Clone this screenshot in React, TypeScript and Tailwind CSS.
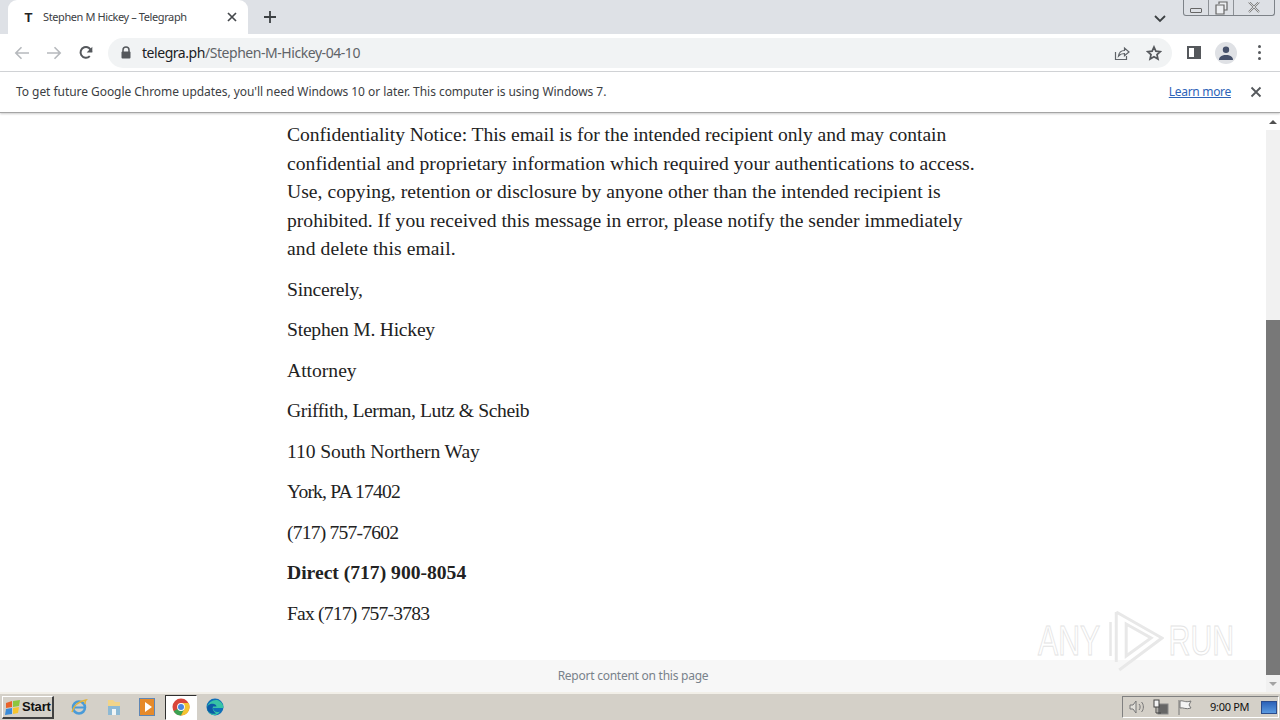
import React from "react";

const ui = "font-['Noto_Sans','Open_Sans',sans-serif]";

function Tab() {
  return (
    <div className="relative ml-[8px] flex h-[34px] w-[240px] items-center self-end rounded-t-[9px] bg-white pl-[14px] pr-[9px]">
      <span className="w-[13px] text-center font-['Liberation_Sans',sans-serif] text-[13px] font-bold leading-none text-[#222]">T</span>
      <span className="ml-[8px] flex-1 whitespace-nowrap text-[11px] tracking-[-0.4px] text-[#3c4043]">Stephen M Hickey – Telegraph</span>
      <svg width="12" height="12" viewBox="0 0 12 12" className="mr-[1px]"><path d="M2 2l8 8M10 2l-8 8" stroke="#45484c" strokeWidth="1.7" /></svg>
    </div>
  );
}

function TitleBar() {
  return (
    <div className="flex h-[34px] items-end bg-[#dee1e6]">
      <Tab />
      <div className="flex h-[34px] w-[44px] items-center justify-center">
        <svg width="14" height="14" viewBox="0 0 14 14"><path d="M7 1v12M1 7h12" stroke="#3c4043" strokeWidth="1.8" /></svg>
      </div>
      <div className="flex-1" />
      <div className="mr-[17px] flex h-[34px] items-center pt-[3px]">
        <svg width="12" height="8" viewBox="0 0 12 8"><path d="M1 1l5 5 5-5" fill="none" stroke="#3c4043" strokeWidth="1.8" /></svg>
      </div>
      <div className="mb-[18px] mr-[5px] flex h-[16px] w-[92px] items-center rounded-b-[3px] border border-t-0 border-[#7d8288] bg-[#dde0e5]">
        <div className="flex h-full w-[25px] items-center justify-center border-r border-[#8d9196]">
          <span className="mt-[5px] block h-[5px] w-[12px] rounded-[1px] border border-[#666]" />
        </div>
        <div className="flex h-full w-[25px] items-center justify-center border-r border-[#8d9196]">
          <svg width="13" height="14" viewBox="0 0 13 14"><path d="M4 3V1h8v8h-3M1 4h8v9H1z" fill="#eceef1" stroke="#666" strokeWidth="1.2" /></svg>
        </div>
        <div className="flex h-full flex-1 items-center justify-center">
          <svg width="12" height="11" viewBox="0 0 12 11"><path d="M1 0l10 10M11 0L1 10" stroke="#777" strokeWidth="2" /><path d="M1 0l10 10M11 0L1 10" stroke="#fff" strokeWidth="0.7" /></svg>
        </div>
      </div>
    </div>
  );
}

function Toolbar() {
  return (
    <div className="flex h-[38px] items-center border-b border-[#d3d5d8] bg-white">
      <div className="ml-[14px] flex w-[16px] justify-center">
        <svg width="16" height="14" viewBox="0 0 16 14"><path d="M15 7H2M7.5 1.2L1.8 7l5.7 5.8" fill="none" stroke="#b6b9bd" strokeWidth="1.6" /></svg>
      </div>
      <div className="ml-[16px] flex w-[16px] justify-center">
        <svg width="16" height="14" viewBox="0 0 16 14"><path d="M1 7h13M8.500 1.200L14.200 7l-5.700 5.800" fill="none" stroke="#b6b9bd" strokeWidth="1.6" /></svg>
      </div>
      <div className="ml-[16px] flex w-[16px] justify-center">
        <svg width="17" height="17" viewBox="0 0 24 24"><path d="M20 11a8.100 8.100 0 1 0-2.300 6.500" fill="none" stroke="#55585c" strokeWidth="3" /><path d="M21.500 3.500v8.500H13z" fill="#55585c" /></svg>
      </div>
      <div className="ml-[14px] flex h-[30px] flex-1 items-center rounded-full bg-[#f1f3f4] pl-[12px]">
        <svg width="12" height="13" viewBox="0 0 12 13"><path d="M3 6V4a3 3 0 0 1 6 0v2" fill="none" stroke="#55585c" strokeWidth="1.5" /><rect x="1.500" y="5.500" width="9" height="7" rx="1" fill="#55585c" /></svg>
        <span className="ml-[10px] whitespace-nowrap text-[14px] tracking-[-0.45px] text-[#202124]">telegra.ph<span className="text-[#5f6368]">/Stephen-M-Hickey-04-10</span></span>
        <div className="flex-1" />
        <svg width="16" height="16" viewBox="0 0 16 16" className="mr-[16px]"><path d="M1.500 7v7.500h11V11" fill="none" stroke="#5f6368" strokeWidth="1.200" /><path d="M4.500 11c.5-3.500 3-5.500 6-5.500V3l4.500 4-4.500 3.800V8.500c-2.500 0-4.500.8-6 2.500z" fill="none" stroke="#5f6368" strokeWidth="1.200" /></svg>
        <svg width="16" height="16" viewBox="0 0 24 24" className="mr-[10px]"><path d="M12 3l2.800 6.200 6.700.7-5 4.500 1.400 6.600L12 17.600 6.100 21l1.400-6.600-5-4.500 6.700-.7z" fill="none" stroke="#55585c" strokeWidth="2.600" /></svg>
      </div>
      <div className="ml-[15px] flex w-[14px] justify-center">
        <div className="flex h-[13px] w-[14px] border-2 border-[#55585c]"><div className="w-[5px]" /><div className="flex-1 bg-[#55585c]" /></div>
      </div>
      <div className="ml-[14px] flex h-[22px] w-[22px] items-center justify-center overflow-hidden rounded-full bg-[#dfe1e5]">
        <svg width="14" height="14" viewBox="0 0 14 14"><circle cx="7" cy="3.800" r="3.200" fill="#45506a" /><path d="M0 14c0-3.500 3-5 7-5s7 1.500 7 5z" fill="#45506a" /></svg>
      </div>
      <div className="ml-[20px] mr-[19px] flex w-[4px] flex-col items-center gap-[3px]">
        <span className="h-[3px] w-[3px] rounded-full bg-[#55585c]" />
        <span className="h-[3px] w-[3px] rounded-full bg-[#55585c]" />
        <span className="h-[3px] w-[3px] rounded-full bg-[#55585c]" />
      </div>
    </div>
  );
}

function InfoBar() {
  return (
    <div className="relative z-10 flex h-[41px] items-center border-b border-[#a5a5a5] bg-white pl-[16px] pr-[18px] shadow-[0_1px_2px_rgba(0,0,0,0.2)]">
      <span className="flex-1 whitespace-nowrap text-[12px] tracking-[-0.05px] text-[#3c4043]">To get future Google Chrome updates, you'll need Windows 10 or later. This computer is using Windows 7.</span>
      <span className="mr-[19px] text-[12px] tracking-[-0.3px] text-[#2d63b8] underline">Learn more</span>
      <svg width="12" height="12" viewBox="0 0 12 12"><path d="M1.500 1.500l9 9M10.500 1.500l-9 9" stroke="#55585c" strokeWidth="1.800" /></svg>
    </div>
  );
}

const P = ({ children, className }: { children: React.ReactNode; className?: string }) => (
  <p className={`mb-[12px] whitespace-nowrap ${className ?? ""}`}>{children}</p>
);

function Watermark() {
  return (
    <div className="absolute bottom-[20px] left-[1038px] flex origin-left scale-x-[0.72] items-center gap-[13px] font-['Liberation_Sans',sans-serif] text-[42px] leading-none text-transparent [-webkit-text-stroke:1px_#e4e4e4]">
      <span>ANY</span>
      <svg width="76" height="62" viewBox="0 0 55 62" preserveAspectRatio="none">
        <path d="M7 2L53 28 10 60M17 14L42 28 17 46ZM1 12V46M7 2V52" fill="none" stroke="#e8e8e8" strokeWidth="3" />
      </svg>
      <span className="ml-[-7px]">RUN</span>
    </div>
  );
}

function Page() {
  return (
    <div className="relative flex min-h-0 flex-1">
      <div className="flex min-w-0 flex-1 flex-col bg-white">
        <div className="min-h-0 flex-1 overflow-hidden pl-[287px] pt-[8px] font-['Liberation_Serif',serif] text-[19.6px] leading-[28.5px] text-[#222]">
          <div className="mb-[12px] flex flex-col whitespace-nowrap">
            <p className="tracking-[-0.05px]">Confidentiality Notice: This email is for the intended recipient only and may contain</p>
            <p className="tracking-[0.05px]">confidential and proprietary information which required your authentications to access.</p>
            <p className="tracking-[0.035px]">Use, copying, retention or disclosure by anyone other than the intended recipient is</p>
            <p className="tracking-[0.02px]">prohibited. If you received this message in error, please notify the sender immediately</p>
            <p className="tracking-[0.1px]">and delete this email.</p>
          </div>
          <P className="tracking-[-0.2px]">Sincerely,</P>
          <P className="tracking-[-0.23px]">Stephen M. Hickey</P>
          <P>Attorney</P>
          <P className="tracking-[-0.39px]">Griffith, Lerman, Lutz &amp; Scheib</P>
          <P className="tracking-[-0.1px]">110 South Northern Way</P>
          <P className="tracking-[-0.8px]">York, PA 17402</P>
          <P className="tracking-[-0.8px]">(717) 757-7602</P>
          <P className="font-bold">Direct (717) 900-8054</P>
          <P className="tracking-[-0.8px]">Fax (717) 757-3783</P>
        </div>
        <div className="flex h-[32px] shrink-0 items-center justify-center bg-[#f7f7f7] text-[12px] tracking-[-0.25px] text-[#79828b]">Report content on this page</div>
      </div>
      <div className="flex w-[14px] shrink-0 flex-col bg-[#f1f1f1]">
        <div className="flex h-[17px] items-center justify-center bg-white">
          <span className="h-0 w-0 border-x-[4px] border-b-[4px] border-x-transparent border-b-[#505050]" />
        </div>
        <div className="h-[190px]" />
        <div className="flex-1 bg-[#787878]" />
        <div className="flex h-[17px] items-center justify-center">
          <span className="h-0 w-0 border-x-[4px] border-t-[4px] border-x-transparent border-t-[#a3a3a3]" />
        </div>
      </div>
      <Watermark />
    </div>
  );
}

function Taskbar() {
  return (
    <div className="flex h-[28px] shrink-0 items-center border-t-2 border-[#f2efe8] bg-[#d4d0c8]">
      <div className="ml-[2px] flex h-[23px] w-[52px] items-center border border-b-2 border-r-2 border-[#fff] border-b-[#404040] border-r-[#404040] bg-[#d4d0c8] pl-[2px]">
        <svg width="16" height="16" viewBox="0 0 16 16"><path d="M1 4l6-2v6l-6 1z" fill="#e8622a" /><path d="M8 2l7-1-1 6-6 1z" fill="#8cc63f" /><path d="M1 10l6-1v6l-7 1z" fill="#3b8bd8" /><path d="M8 9l6-1-1 6-5 1z" fill="#f7c52c" /></svg>
        <span className="ml-[1px] font-['Liberation_Sans',sans-serif] text-[13px] font-bold leading-none tracking-[-0.2px] text-[#111]">Start</span>
      </div>
      <svg width="18" height="18" viewBox="0 0 18 18" className="ml-[16px]"><circle cx="9" cy="9.500" r="6" fill="none" stroke="#4a9bd8" strokeWidth="2.500" /><path d="M3.500 9.500h11" stroke="#4a9bd8" strokeWidth="2" /><path d="M2 14C4 7 10 3 16 2c-1 1-1 3-1 4" fill="none" stroke="#e2b33c" strokeWidth="1.500" /></svg>
      <svg width="16" height="17" viewBox="0 0 16 17" className="ml-[18px]"><path d="M2 1h5l2 2h5v13H2z" fill="#f1d488" /><rect x="2" y="7" width="12" height="9" fill="#8db9d4" /><rect x="6" y="10" width="4" height="6" fill="#f1f5f5" /></svg>
      <div className="ml-[17px] flex h-[18px] w-[16px] items-center justify-center border border-[#5e86b5] bg-[#e68a2a]">
        <span className="ml-[2px] h-0 w-0 border-y-[5px] border-l-[7px] border-y-transparent border-l-white" />
      </div>
      <div className="ml-[10px] flex h-[25px] w-[32px] items-center justify-center border border-b-[#fff] border-l-[#303030] border-r-[#fff] border-t-[#303030] bg-white">
        <svg width="18" height="18" viewBox="0 0 18 18">
          <circle cx="9" cy="9" r="8.500" fill="#d9463a" />
          <path d="M9 9L1.600 13.300A8.500 8.500 0 0 0 9 17.500l4-7z" fill="#3ba252" />
          <path d="M9 5h7.600A8.500 8.500 0 0 1 9 17.500l4-8z" fill="#f4c430" />
          <circle cx="9" cy="9" r="3.900" fill="#fff" />
          <circle cx="9" cy="9" r="3" fill="#4a86e0" />
        </svg>
      </div>
      <svg width="18" height="18" viewBox="0 0 18 18" className="ml-[9px]">
        <circle cx="9" cy="9" r="8.500" fill="#0f6fb8" />
        <path d="M1 10C2 4 8 1 12.500 2.500 16 4 17.500 7 17.500 10H7c0 3 3 5 7 3.500-2 3-5 4-7 3.500C3.500 16 1 13 1 10z" fill="#37c3a6" />
        <path d="M1 10c0-3 4-5 7-4 2 .7 2.500 2 2.500 2.500H7c-1 2 0 5 3 7-4 1-9-1-9-5.500z" fill="#0c5aa6" />
      </svg>
      <div className="flex-1" />
      <div className="mr-[1px] flex h-[22px] w-[157px] items-center border border-b-[#fff] border-l-[#808080] border-r-[#fff] border-t-[#808080] pl-[6px]">
        <svg width="16" height="16" viewBox="0 0 16 16"><path d="M1 6h3l3-4v12l-3-4H1z" fill="#e2e0da" stroke="#777" /><path d="M10 5c1.500 1.500 1.500 4.500 0 6M12.500 3c2.500 2.500 2.500 7.500 0 10" fill="none" stroke="#777" /></svg>
        <svg width="17" height="17" viewBox="0 0 17 17" className="ml-[8px]"><rect x="5" y="5" width="10" height="10" fill="#666" stroke="#888" /><rect x="1" y="1" width="5" height="7" fill="#f4f4f4" stroke="#444" /><path d="M3 8v6h5" stroke="#444" fill="none" /></svg>
        <svg width="16" height="16" viewBox="0 0 16 16" className="ml-[7px]"><path d="M2 1v15" stroke="#777" /><path d="M3 2c3-1 5 2 11 0l-2 4 2 3c-5 2-8-1-11 0z" fill="#f4f4f4" stroke="#777" /></svg>
        <span className={`ml-[17px] whitespace-nowrap text-[11px] tracking-[-0.3px] text-[#111] ${ui}`}>9:00 PM</span>
        <div className="ml-[12px] h-[13px] w-[16px] border border-[#2b4c8c] bg-[linear-gradient(#2c62b8,#5a9ae0)]" />
      </div>
    </div>
  );
}

export default function App() {
  return (
    <div className={`flex h-[720px] w-[1280px] flex-col overflow-hidden bg-white ${ui}`}>
      <TitleBar />
      <Toolbar />
      <InfoBar />
      <Page />
      <Taskbar />
    </div>
  );
}
